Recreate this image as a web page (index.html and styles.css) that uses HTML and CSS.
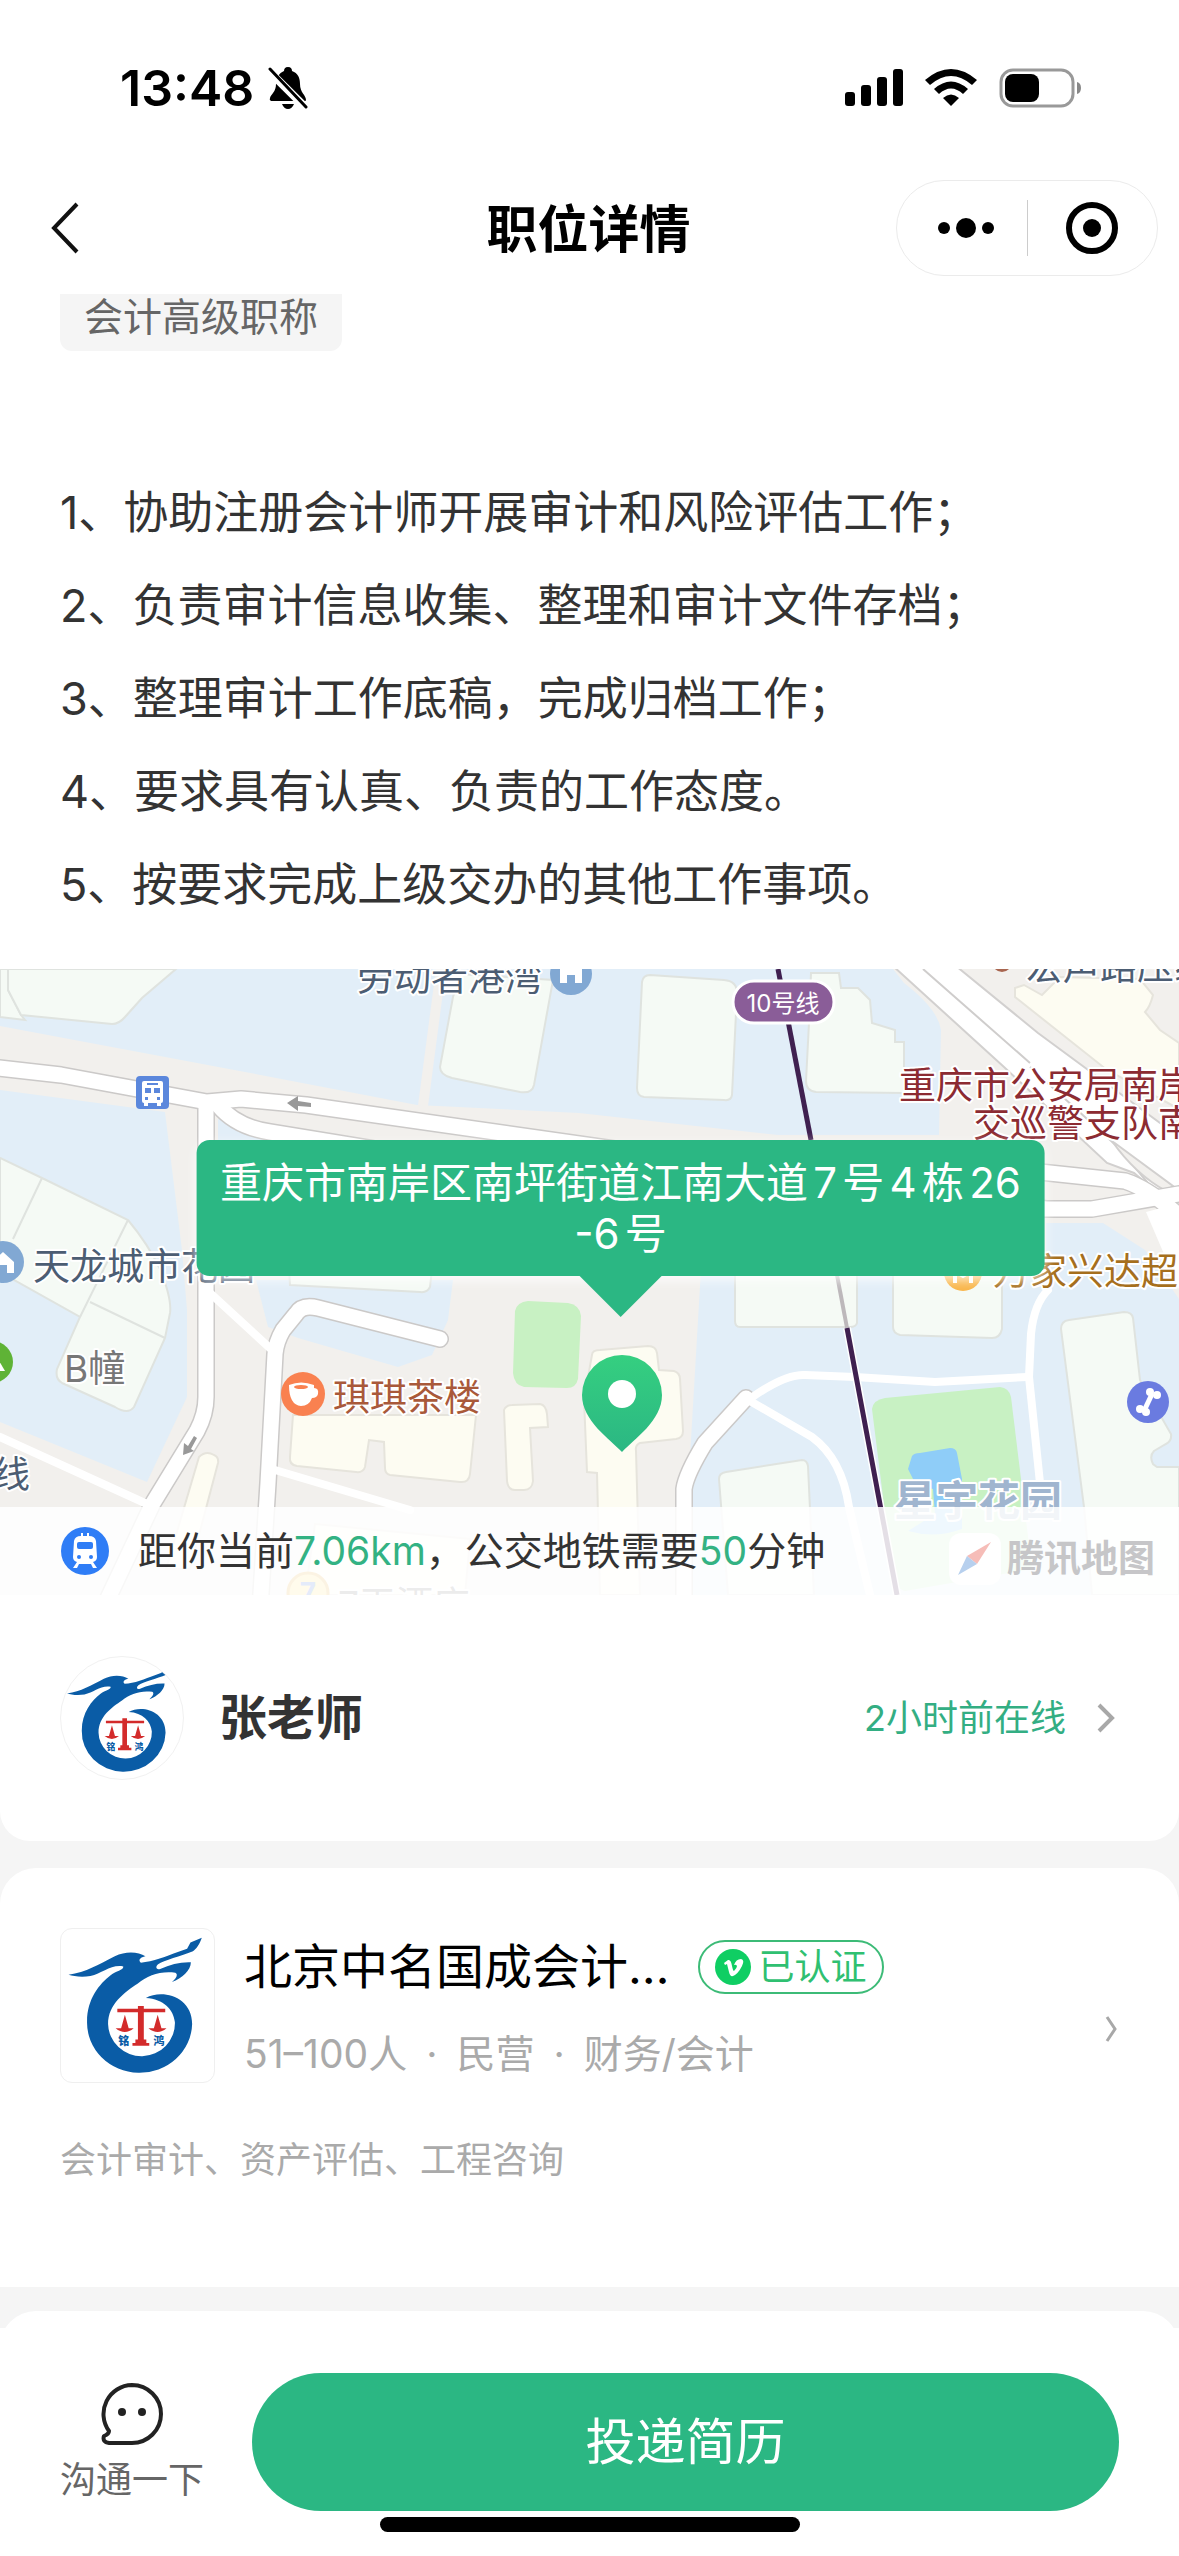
FILE: index.html
```
<!DOCTYPE html>
<html lang="zh-CN">
<head>
  <meta charset="UTF-8" />
  <meta name="viewport" content="width=device-width" />
  <title>职位详情</title>
  <link rel="stylesheet" href="styles.css">
</head>
<body>
  <!-- shared logo artwork -->
  <svg class="defs" width="0" height="0" aria-hidden="true">
    <symbol id="logo" viewBox="32 48 364 364">
      <path fill="#0a5ca6" d="M50 157C92 151 122 132 160 113C186 100 216 102 233 113C222 115 214 122 222 128C250 127 284 112 310 103L332 95L340 80L367 69C362 84 354 96 346 101C318 113 276 122 263 132C256 138 258 146 268 143C292 132 316 126 341 127C341 146 320 165 296 174C305 166 312 156 304 152C270 147 238 158 214 178C184 198 144 226 144 274A79 78 0 1 0 303 270C300 240 276 214 234 212C272 190 344 208 344 274A125 119 0 0 1 94 268C94 214 124 178 150 158C164 147 182 145 180 137C150 132 130 154 102 160C82 163 62 161 50 157Z"/>
      <path fill="#d32b2b" d="M215 231h14v7h51v8h-51v65h6v8h7v7h-40v-7h7v-8h6v-65h-49v-8h49zM184 252l9 32h12q-21 18-43 0h13zM262 252l9 32h12q-21 18-43 0h13z"/>
      <text x="168" y="325" class="logo-text">铭</text>
      <text x="252" y="325" class="logo-text">鸿</text>
    </symbol>
  </svg>

  <div class="page">
    <header class="header">
      <div class="status">
        <div class="clock">
          <span>13:48</span>
          <svg width="40" height="44" viewBox="0 0 40 44">
            <path d="M20 1c3 0 4 2 4 4c6 2 8 7 8 13c0 9 6 11 6 16q0 1-1 1H3q-2-1-1-3c1-4 6-6 6-14c0-6 3-11 8-13c0-2 1-4 4-4zM14 38h12q-2 5-6 5t-6-5z"/>
            <path d="M1 5L38 42" stroke="#fff" stroke-width="8"/>
            <path d="M2 3L38 41" stroke="#000" stroke-width="3" stroke-linecap="round"/>
          </svg>
        </div>
        <div class="signals">
          <svg width="58" height="38" viewBox="0 0 58 38">
            <rect x="0" y="23" width="10" height="14" rx="3"/>
            <rect x="16" y="16" width="10" height="21" rx="3"/>
            <rect x="32" y="8" width="10" height="29" rx="3"/>
            <rect x="48" y="0" width="10" height="37" rx="3"/>
          </svg>
          <svg width="52" height="38" viewBox="0 0 52 38">
            <path d="M0 11Q26-11 52 11L47 16Q26-2 5 16zM9 20Q26 5 43 20L38 25Q26 14 14 25zM18 29Q26 22 34 29L26 37z"/>
          </svg>
          <svg width="84" height="40" viewBox="0 0 84 40">
            <rect x="2" y="2" width="72" height="36" rx="12" fill="none" stroke="#999" stroke-width="3"/>
            <rect x="6" y="6" width="34" height="28" rx="8"/>
            <path d="M78 14q4 1 4 6t-4 6z" fill="#888"/>
          </svg>
        </div>
      </div>

      <nav class="nav">
        <button class="back" aria-label="返回">
          <svg width="28" height="52" viewBox="0 0 28 52"><path d="M26 2L3 26L26 50" fill="none" stroke="#111" stroke-width="4"/></svg>
        </button>
        <h1 class="title">职位详情</h1>
        <div class="capsule">
          <button aria-label="更多">
            <svg class="dots" width="56" height="20" viewBox="0 0 56 20"><circle cx="6" cy="10" r="6"/><circle cx="28" cy="10" r="10"/><circle cx="50" cy="10" r="6"/></svg>
          </button>
          <span class="split"></span>
          <button aria-label="关闭">
            <svg width="52" height="52" viewBox="0 0 52 52"><circle cx="26" cy="26" r="23" fill="none" stroke="#000" stroke-width="6"/><circle cx="26" cy="26" r="9"/></svg>
          </button>
        </div>
      </nav>
    </header>

    <main class="main">
      <section class="job">
        <span class="tag">会计高级职称</span>
        <div class="desc">
          <p>1、协助注册会计师开展审计和风险评估工作；</p>
          <p>2、负责审计信息收集、整理和审计文件存档；</p>
          <p>3、整理审计工作底稿，完成归档工作；</p>
          <p>4、要求具有认真、负责的工作态度。</p>
          <p>5、按要求完成上级交办的其他工作事项。</p>
        </div>
      </section>

      <section class="map">
        <svg class="map-canvas" viewBox="0 0 1179 626" preserveAspectRatio="xMidYMid slice">
          <rect width="1179" height="626" fill="#f2f0ed"/>

          <!-- residential blocks -->
          <g fill="#e2eef8">
            <path d="M0 0H893L904 14Q938 40 941 61L939 166H778L732 161L579 144L417 136L245 103L0 57z"/>
            <path d="M0 121L165 143L182 281L187 341V428L147 513L0 453z"/>
            <path d="M218 150L300 175H218z"/>
            <path d="M256 311H453L448 351L432 386L398 398L298 369L268 358z"/>
            <path d="M701 300H1046V254H1103L1145 281L1179 330V626H690V488z"/>
          </g>
          <path d="M441 0L423 137" stroke="#f2f0ed" stroke-width="10"/>

          <!-- buildings -->
          <g fill="#f5faf5" stroke="#dfe3df" stroke-width="2">
            <path d="M0 0H8L8 21L21 46L25 51L0 48z"/>
            <path d="M8 0V21L21 46L112 55Q119 55 125 48L142 29L176 0z"/>
            <path d="M0 189L42 209L128 251Q148 275 160 300Q172 330 170 344L165 369L134 438Q128 446 115 438L62 414Q55 410 57 400L80 348L0 303z"/>
            <path d="M42 209L13 270M128 251L80 348M90 333L165 369" fill="none"/>
            <path d="M453 28L440 98Q440 106 452 109L520 123Q532 125 534 116L553 11L460 5z"/>
            <path d="M650 6L724 11Q737 12 737 24L732 126Q731 132 724 131L644 128Q637 127 637 119L642 13Q643 6 650 6z"/>
            <path d="M811 4H839L841 19H858L870 31L872 54L895 61V73H904V124L816 123Q806 122 806 112L809 54z"/>
            <path d="M289 300H432L430 318Q427 324 420 323L290 316z"/>
            <path d="M735 300H857V354Q856 358 850 358H740Q735 358 735 352z"/>
            <path d="M893 300H1002V360Q1000 369 992 369L900 366Q893 364 893 358z"/>
            <path d="M719 510Q719 504 726 503L802 491Q807 491 808 497L814 626H728z"/>
            <path d="M1061 360Q1061 352 1069 351L1124 343Q1132 343 1133 349L1140 411L1171 465Q1172 472 1166 475L1154 482Q1149 487 1153 495L1157 498H1179V626H1092L1084 538z"/>
          </g>
          <g fill="#fdfcf2" stroke="#e6e4dc" stroke-width="2">
            <path d="M1015 19L1024 16L1042 26L1060 8L1140 10L1153 26Q1150 38 1145 43L1160 61L1179 74V140L1107 101L1015 28z"/>
            <path d="M293 446H476L470 505Q469 514 460 513L390 506Q385 505 385 499L384 473L369 471L365 498Q363 504 356 503L297 497Q289 496 290 488z"/>
            <path d="M504 441Q506 436 512 436L540 435Q546 436 547 445L548 458L530 459L533 512Q532 521 524 521H515Q508 521 507 512z"/>
            <path d="M199 488Q206 481 214 486Q219 488 218 494L190 600H166z"/>
            <path d="M592 386Q592 381 600 381L648 377Q656 377 657 384L659 401L674 402Q680 404 680 410L683 462Q683 469 676 470L640 474Q635 476 636 482L640 626H600L597 504L587 503L584 430z"/>
            <path d="M315 555L470 570L465 626H305z"/>
          </g>
          <g fill="#c8f1c3">
            <path d="M515 342Q517 333 528 332L568 334Q580 336 581 347L578 410Q576 419 567 419L524 418Q514 416 513 404z"/>
            <path d="M872 440Q873 431 885 429L1000 418Q1009 419 1011 428L1032 600L905 622Q895 620 892 600z"/>
          </g>
          <path fill="#8fcdf8" d="M908 500L912 487Q914 484 920 484L950 479Q956 479 957 484L962 510V560Q935 570 908 562L935 545L933 520L916 516z"/>

          <!-- roads: grey casing first, white on top -->
          <path fill="#fff" stroke="#d2d0cf" stroke-width="2" d="M893 -3L1004 98L1107 194L1134 204L1200 260V185L1179 168L1038 64L956 -3z"/>
          <path d="M923 0L1030 94M1030 98L1120 180L1165 235" fill="none" stroke="#cfcdcc" stroke-width="2"/>
          <path fill="#f2f0ed" stroke="#d2d0cf" stroke-width="2" d="M1112 172L1173 217L1166 222Q1135 205 1112 172z"/>
          <g fill="none" stroke="#cbc9c8" stroke-linecap="round" stroke-linejoin="round">
            <g stroke-width="18">
              <path d="M-10 98L61 106L207 133L241 130L306 136L600 178L1046 240L1092 240L1179 225"/>
              <path d="M218 136Q236 158 270 163L380 181"/>
              <path d="M206 138V428Q206 445 197 462L153 534L103 640"/>
              <path d="M440 370L318 339Q302 335 296 345L283 361Q276 373 275 385L268 514L260 640"/>
              <path d="M684 640V520Q686 505 705 474L746 429"/>
              <path d="M1040 203L1125 212Q1150 220 1185 252"/>
            </g>
            <g stroke="#fff" stroke-width="15">
              <path d="M-10 98L61 106L207 133L241 130L306 136L600 178L1046 240L1092 240L1179 225"/>
              <path d="M218 136Q236 158 270 163L380 181"/>
              <path d="M206 138V428Q206 445 197 462L153 534L103 640"/>
              <path d="M440 370L318 339Q302 335 296 345L283 361Q276 373 275 385L268 514L260 640"/>
              <path d="M684 640V520Q686 505 705 474L746 429"/>
              <path d="M1040 203L1125 212Q1150 220 1185 252"/>
            </g>
            <g stroke="#fff" stroke-width="8">
              <path d="M210 324L272 381M0 468L147 535M275 501L410 541"/>
              <path d="M751 429Q785 405 805 406L855 408L935 413L1027 408"/>
              <path d="M1048 321Q1034 335 1031 365L1029 408L1040 514"/>
              <path d="M750 432L812 468Q842 490 849 538L870 626"/>
            </g>
          </g>
          <path d="M1165 238L1146 243L1179 320V250z" fill="#fff"/>
          <g fill="#999">
            <path d="M287 134l11-7v5l13 2v4l-13-1v5z"/>
            <path d="M183 486l1-12l4 3l6-10l3 2l-6 11l3 2z"/>
          </g>

          <!-- metro line 10 -->
          <path d="M778 0L811 171" stroke="#3f2050" stroke-width="5"/>
          <path d="M837 306L847 359" stroke="#bdb8bb" stroke-width="4"/>
          <path d="M847 359L897 626" stroke="#fff" stroke-width="8"/>
          <path d="M847 359L897 626" stroke="#3f2050" stroke-width="5"/>
          <rect x="733" y="12" width="101" height="42" rx="21" fill="#8a5d98" stroke="#fff" stroke-width="3"/>
          <text x="783" y="43" font-size="24" fill="#fff" text-anchor="middle">10号线</text>

          <!-- place names -->
          <g class="poi">
            <text x="357" y="22">劳动者港湾</text>
            <text x="33" y="311">天龙城市花园</text>
            <text x="-7" y="519">线</text>
            <text x="1026" y="11">宏声路压线</text>
            <text x="64" y="413" fill="#777">B幢</text>
            <text x="333" y="442" fill="#a9593a">琪琪茶楼</text>
            <text x="899" y="130" fill="#8c2b32">重庆市公安局南岸</text>
            <text x="973" y="168" fill="#8c2b32">交巡警支队南</text>
            <text x="993" y="316" fill="#a66f1d">万家兴达超</text>
            <text x="338" y="649" fill="#777">7天酒店</text>
            <text x="894" y="547" class="estate">星宇花园</text>
          </g>

          <!-- place icons -->
          <g fill="#81a8d3"><circle cx="571" cy="5" r="21"/><circle cx="3" cy="293" r="21"/></g>
          <path fill="#fff" d="M560 14V-2H582V14H575V6H567V14zM-8 293L3 283L14 293V304H7V296H-1V304H-8z"/>
          <circle cx="-8" cy="393" r="21" fill="#5fb336"/>
          <path fill="#fff" d="M-8 380L5 402H-8z"/>
          <circle cx="1002" cy="-7" r="10" fill="#a8654f"/>
          <rect x="136" y="107" width="33" height="33" rx="4" fill="#5b87dc"/>
          <path fill="#fff" d="M144 112h17q2 0 2 2v18q0 2-2 2v3h-4v-3h-9v3h-4v-3q-2 0-2-2v-18q0-2 2-2z"/>
          <path fill="#5b87dc" d="M147 114h11v2h-11zM145 119h6v5h-6zM154 119h6v5h-6zM145 128h3v3h-3zM157 128h3v3h-3z"/>
          <circle cx="303" cy="425" r="22" fill="#f98150"/>
          <path fill="#fff" d="M289 416q12-5 25 0v3q5 0 4 6q-1 4-6 4q-3 8-11 8q-12-1-12-21z"/>
          <ellipse cx="301" cy="418" rx="7" ry="2" fill="#f98150"/>
          <circle cx="963" cy="303" r="19" fill="#f9b548"/>
          <path d="M955 314v-12l8 5l8-5v12" stroke="#fff" stroke-width="4" fill="none"/>
          <circle cx="1148" cy="433" r="21" fill="#6a7be0"/>
          <g fill="#fff"><path d="M1144 442L1152 425" stroke="#fff" stroke-width="5"/><circle cx="1150" cy="423" r="4"/><circle cx="1157" cy="426" r="4"/><circle cx="1140" cy="440" r="4"/><circle cx="1146" cy="443" r="4"/></g>
          <circle cx="308" cy="624" r="20" fill="#fbe07a" stroke="#e4a93b" stroke-width="3"/>
          <text x="308" y="634" font-size="28" font-weight="700" fill="#3f74d8" text-anchor="middle">7</text>

          <!-- job location pin -->
          <defs><linearGradient id="pin" x2="0" y2="1"><stop stop-color="#35cf80"/><stop offset="1" stop-color="#2bb783"/></linearGradient></defs>
          <path fill="url(#pin)" d="M622 483C610 470 582 452 582 426A40 40 0 0 1 662 426C662 452 634 470 622 483z"/>
          <circle cx="622" cy="425" r="14" fill="#fff"/>
        </svg>
        <div class="bubble">重庆市南岸区南坪街道江南大道7号4栋26<br>-6号</div>
        <div class="route">
          <svg width="48" height="48" viewBox="0 0 48 48">
            <circle cx="24" cy="24" r="24" fill="#2f7df6"/>
            <path fill="#fff" d="M20 6h2v3h4V6h2v3q6 0 7 5l1 16q0 4-4 5l4 6h-4l-2-4H18l-2 4h-4l4-6q-4-1-4-5l1-16q1-5 7-5z"/>
            <rect x="16" y="15" width="16" height="7" rx="2" fill="#2f7df6"/>
            <circle cx="18" cy="30" r="2" fill="#2f7df6"/><circle cx="30" cy="30" r="2" fill="#2f7df6"/>
          </svg>
          <span>距你当前<em>7.06km</em>，公交地铁需要<em>50</em>分钟</span>
        </div>
        <div class="brand">
          <svg width="52" height="52" viewBox="0 0 52 52">
            <rect width="52" height="52" rx="12" fill="#fff" opacity=".9"/>
            <path d="M42 9L28 31L18 23z" fill="#f6bdb8"/><path d="M9 42L28 31L18 23z" fill="#b7d0ee"/>
          </svg>
          <span>腾讯地图</span>
        </div>
      </section>

      <a class="contact" href="#">
        <svg class="avatar"><use href="#logo"/></svg>
        <span class="name">张老师</span>
        <span class="online">2小时前在线</span>
        <svg width="18" height="30" viewBox="0 0 18 30"><path d="M2 2L15 15L2 28" fill="none" stroke="#a8a8a8" stroke-width="4"/></svg>
      </a>

      <section class="company">
        <a class="company-row" href="#">
          <svg class="company-logo"><use href="#logo"/></svg>
          <div class="company-info">
            <div class="company-head">
              <h2>北京中名国成会计…</h2>
              <span class="badge">
                <svg width="36" height="36" viewBox="0 0 36 36"><circle cx="18" cy="18" r="18" fill="#0fce63"/><path d="M9 14L13 11Q16 10 17 17Q18 22 19 22Q22 19 22 17Q21 15 19 16Q21 10 26 10Q30 11 27 17Q23 25 18 27Q15 28 14 23L12 15L10 16z" fill="#fff"/></svg>
                已认证
              </span>
            </div>
            <p class="meta">51–100人<i>·</i>民营<i>·</i>财务/会计</p>
          </div>
          <svg class="enter" width="14" height="28" viewBox="0 0 14 28"><path d="M2 2L10 14L2 26" fill="none" stroke="#a8a8a8" stroke-width="3"/></svg>
        </a>
        <p class="scope">会计审计、资产评估、工程咨询</p>
      </section>

      <section class="more"></section>
    </main>

    <footer class="footer">
      <div class="actions">
        <button class="chat">
          <svg width="62" height="62" viewBox="0 0 62 62">
            <path d="M31 2A29 29 0 0 1 31 60H8Q1 59 3 53Q8 51 8 48A29 29 0 0 1 31 2z" fill="none" stroke="#222" stroke-width="4" stroke-linejoin="round"/>
            <circle cx="21" cy="29" r="4" fill="#222"/><circle cx="41" cy="29" r="4" fill="#222"/>
          </svg>
          沟通一下
        </button>
        <button class="apply">投递简历</button>
      </div>
      <div class="home-bar"></div>
    </footer>
  </div>
</body>
</html>
```
FILE: styles.css
```
* {
  box-sizing: border-box;
}
body {
  margin: 0;
  background: #f5f5f5;
  font-family: Inter, "Noto Sans CJK SC", sans-serif;
  color: #333;
}
p, h1, h2 {
  margin: 0;
}
svg {
  display: block;
  flex: none;
}
a {
  color: inherit;
  text-decoration: none;
}
button {
  display: flex;
  align-items: center;
  justify-content: center;
  padding: 0;
  border: 0;
  background: none;
  font-family: inherit;
  color: inherit;
}
.defs {
  position: absolute;
}
.page {
  display: flex;
  flex-direction: column;
  height: 100vh;
}

/* status bar and title */
.header {
  position: relative;
  z-index: 1;
  padding-bottom: 18px;
  background: #fff;
}
.status {
  display: flex;
  justify-content: space-between;
  align-items: center;
  padding: 58px 96px 62px 120px;
  color: #000;
}
.clock {
  display: flex;
  align-items: center;
  gap: 14px;
  font-size: 50px;
  font-weight: 600;
  line-height: 60px;
}
.signals {
  display: flex;
  align-items: center;
  gap: 22px;
}
.nav {
  display: grid;
  grid-template-columns: 1fr auto 1fr;
  align-items: center;
  padding: 0 21px 0 51px;
}
.back {
  justify-self: start;
}
.title {
  /* padding balances the uneven side gutters of the bar */
  padding: 4px 32px 0 0;
  font-size: 51px;
  font-weight: 700;
  line-height: 72px;
  color: #000;
}
.capsule {
  justify-self: end;
  display: flex;
  align-items: center;
  width: 262px;
  height: 96px;
  border: 1px solid #ebebeb;
  border-radius: 48px;
}
.capsule button {
  flex: 1;
  height: 100%;
}
.dots {
  margin-left: 8px;
}
.split {
  width: 1px;
  height: 56px;
  background: #ccc;
}

/* content */
.main {
  flex: 1;
  min-height: 0;
  overflow: hidden;
}
.job {
  margin-top: -12px;
  padding: 0 60px 38px;
  background: #fff;
}
.tag {
  display: inline-block;
  padding: 0 24px;
  border-radius: 12px;
  background: #f5f5f5;
  font-size: 39px;
  line-height: 69px;
  color: #666;
  vertical-align: top;
}
.desc {
  padding-top: 115px;
  font-size: 45px;
  line-height: 93px;
}

/* map */
.map {
  position: relative;
  height: 626px;
  overflow: hidden;
}
.map-canvas {
  width: 100%;
  height: 100%;
}
.poi {
  font-size: 37px;
  fill: #4c5d73;
  stroke: #fff;
  stroke-width: 4px;
  stroke-linejoin: round;
  paint-order: stroke;
}
.estate {
  font-size: 42px;
  font-weight: 700;
  fill: #a0b5cf;
}
.bubble {
  position: absolute;
  top: 171px;
  left: calc(50% + 31px);
  transform: translateX(-50%);
  padding: 17px 24px;
  border-radius: 13px;
  background: #2bb783;
  box-shadow: 0 4px 12px rgba(255, 255, 255, 0.8);
  font-size: 42px;
  line-height: 51px;
  color: #fff;
  text-align: center;
  text-autospace: normal;
  white-space: nowrap;
}
.bubble::after {
  content: "";
  position: absolute;
  top: 100%;
  left: 50%;
  margin-left: -41px;
  border: 41px solid transparent;
  border-bottom: 0;
  border-top-color: #2bb783;
}
.route {
  position: absolute;
  left: 0;
  right: 0;
  bottom: 0;
  display: flex;
  align-items: center;
  gap: 29px;
  height: 88px;
  padding-left: 61px;
  background: rgba(255, 255, 255, 0.86);
  font-size: 39px;
  line-height: 54px;
}
.route em {
  font-style: normal;
  color: #33b283;
}
.brand {
  position: absolute;
  right: 24px;
  bottom: 10px;
  display: flex;
  align-items: center;
  gap: 6px;
  font-size: 37px;
  font-weight: 700;
  line-height: 52px;
  color: #c6c6c8;
}

/* cards */
.contact {
  display: flex;
  align-items: center;
  padding: 61px 64px 61px 60px;
  border-radius: 0 0 30px 30px;
  background: #fff;
}
.avatar {
  width: 124px;
  height: 124px;
  border: 1px solid #f1f1f1;
  border-radius: 50%;
}
.logo-text {
  font-size: 26px;
  font-weight: 900;
  fill: #0a5ca6;
}
.name {
  flex: 1;
  margin-left: 35px;
  font-size: 48px;
  font-weight: 700;
  line-height: 72px;
}
.online {
  margin-right: 31px;
  font-size: 36px;
  line-height: 54px;
  color: #33ae83;
}
.company {
  margin-top: 27px;
  padding: 60px 60px 100px;
  border-radius: 36px 36px 0 0;
  background: #fff;
}
.company-row {
  display: flex;
  align-items: center;
}
.company-logo {
  width: 155px;
  height: 155px;
  border: 1px solid #efefef;
  border-radius: 12px;
}
.company-info {
  flex: 1;
  margin-left: 29px;
}
.company-head {
  display: flex;
  align-items: center;
  gap: 28px;
}
.company-head h2 {
  font-size: 48px;
  font-weight: 400;
  line-height: 72px;
  color: #000;
}
.badge {
  display: flex;
  align-items: center;
  gap: 8px;
  height: 54px;
  padding: 0 15px;
  border: 2px solid #3cbb77;
  border-radius: 27px;
  font-size: 36px;
  line-height: 50px;
  color: #2fc071;
}
.meta {
  margin-top: 24px;
  font-size: 39px;
  line-height: 54px;
  color: #aaa;
}
.meta i {
  margin: 0 19px;
  font-style: normal;
}
.enter {
  align-self: flex-end;
  margin-bottom: 40px;
}
.scope {
  margin-top: 50px;
  font-size: 36px;
  line-height: 54px;
  color: #aaa;
}
.more {
  height: 120px;
  margin-top: 24px;
  border-radius: 36px 36px 0 0;
  background: #fff;
}

/* bottom bar */
.footer {
  padding: 45px 60px 24px;
  background: #fff;
}
.actions {
  display: flex;
  align-items: center;
  gap: 48px;
}
.chat {
  flex-direction: column;
  gap: 8px;
  padding-top: 6px;
  font-size: 36px;
  line-height: 54px;
  color: #666;
}
.apply {
  flex: 1;
  height: 138px;
  border-radius: 69px;
  background: #2bb783;
  font-size: 50px;
  line-height: 72px;
  color: #fff;
}
.home-bar {
  width: 420px;
  height: 15px;
  margin: 6px auto 0;
  border-radius: 8px;
  background: #000;
}
```
